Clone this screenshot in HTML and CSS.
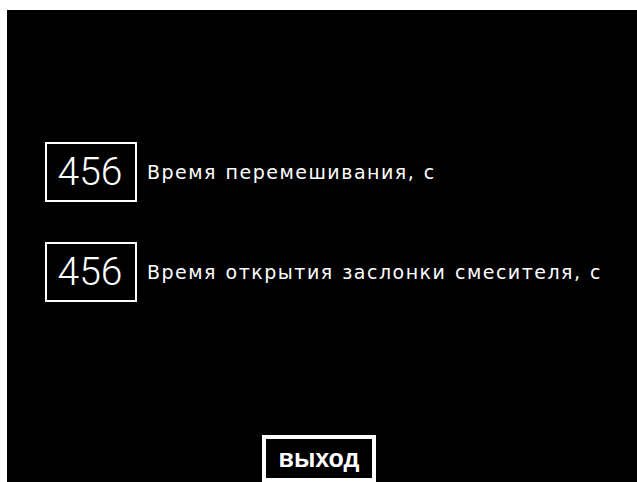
FILE: index.html
```html
<!DOCTYPE html>
<html lang="ru">
<head>
<meta charset="utf-8">
<title>Параметры смесителя</title>
<link rel="stylesheet" href="styles.css">
</head>
<body>
<div class="screen">
  <div class="params">
    <div class="row">
      <div class="value">456</div>
      <div class="label">Время перемешивания, с</div>
    </div>
    <div class="row">
      <div class="value">456</div>
      <div class="label">Время открытия заслонки смесителя, с</div>
    </div>
  </div>
  <div class="footer">
    <button class="exit">выход</button>
  </div>
</div>
</body>
</html>
```
FILE: styles.css
```css
html, body {
  margin: 0;
  background: #fff;
}

.screen {
  margin: 10px 0 0 7px;
  height: 472px;
  background: #000;
  overflow: hidden;
  display: flex;
  flex-direction: column;
}

.params {
  padding: 132px 0 0 38px;
  display: flex;
  flex-direction: column;
  gap: 40px;
}

.row {
  display: flex;
  align-items: center;
  gap: 10px;
  height: 60px;
}

.value {
  box-sizing: border-box;
  width: 92px;
  height: 60px;
  border: 2px solid #fff;
  color: #fff;
  display: flex;
  align-items: center;
  justify-content: center;
  font-family: Roboto, sans-serif;
  font-weight: 300;
  font-size: 39px;
  padding-right: 2px;
}

.label {
  color: #fff;
  font-family: "DejaVu Sans", sans-serif;
  font-size: 19px;
  letter-spacing: 1.5px;
  word-spacing: 1px;
  white-space: nowrap;
}

.footer {
  padding: 133px 0 0 255px;
}

.exit {
  box-sizing: border-box;
  width: 114px;
  height: 47px;
  margin: 0;
  padding: 0;
  background: #000;
  border: 4px solid #fff;
  color: #fff;
  font-family: "Liberation Sans", Arial, sans-serif;
  font-weight: bold;
  font-size: 25px;
  line-height: 1;
}
```
